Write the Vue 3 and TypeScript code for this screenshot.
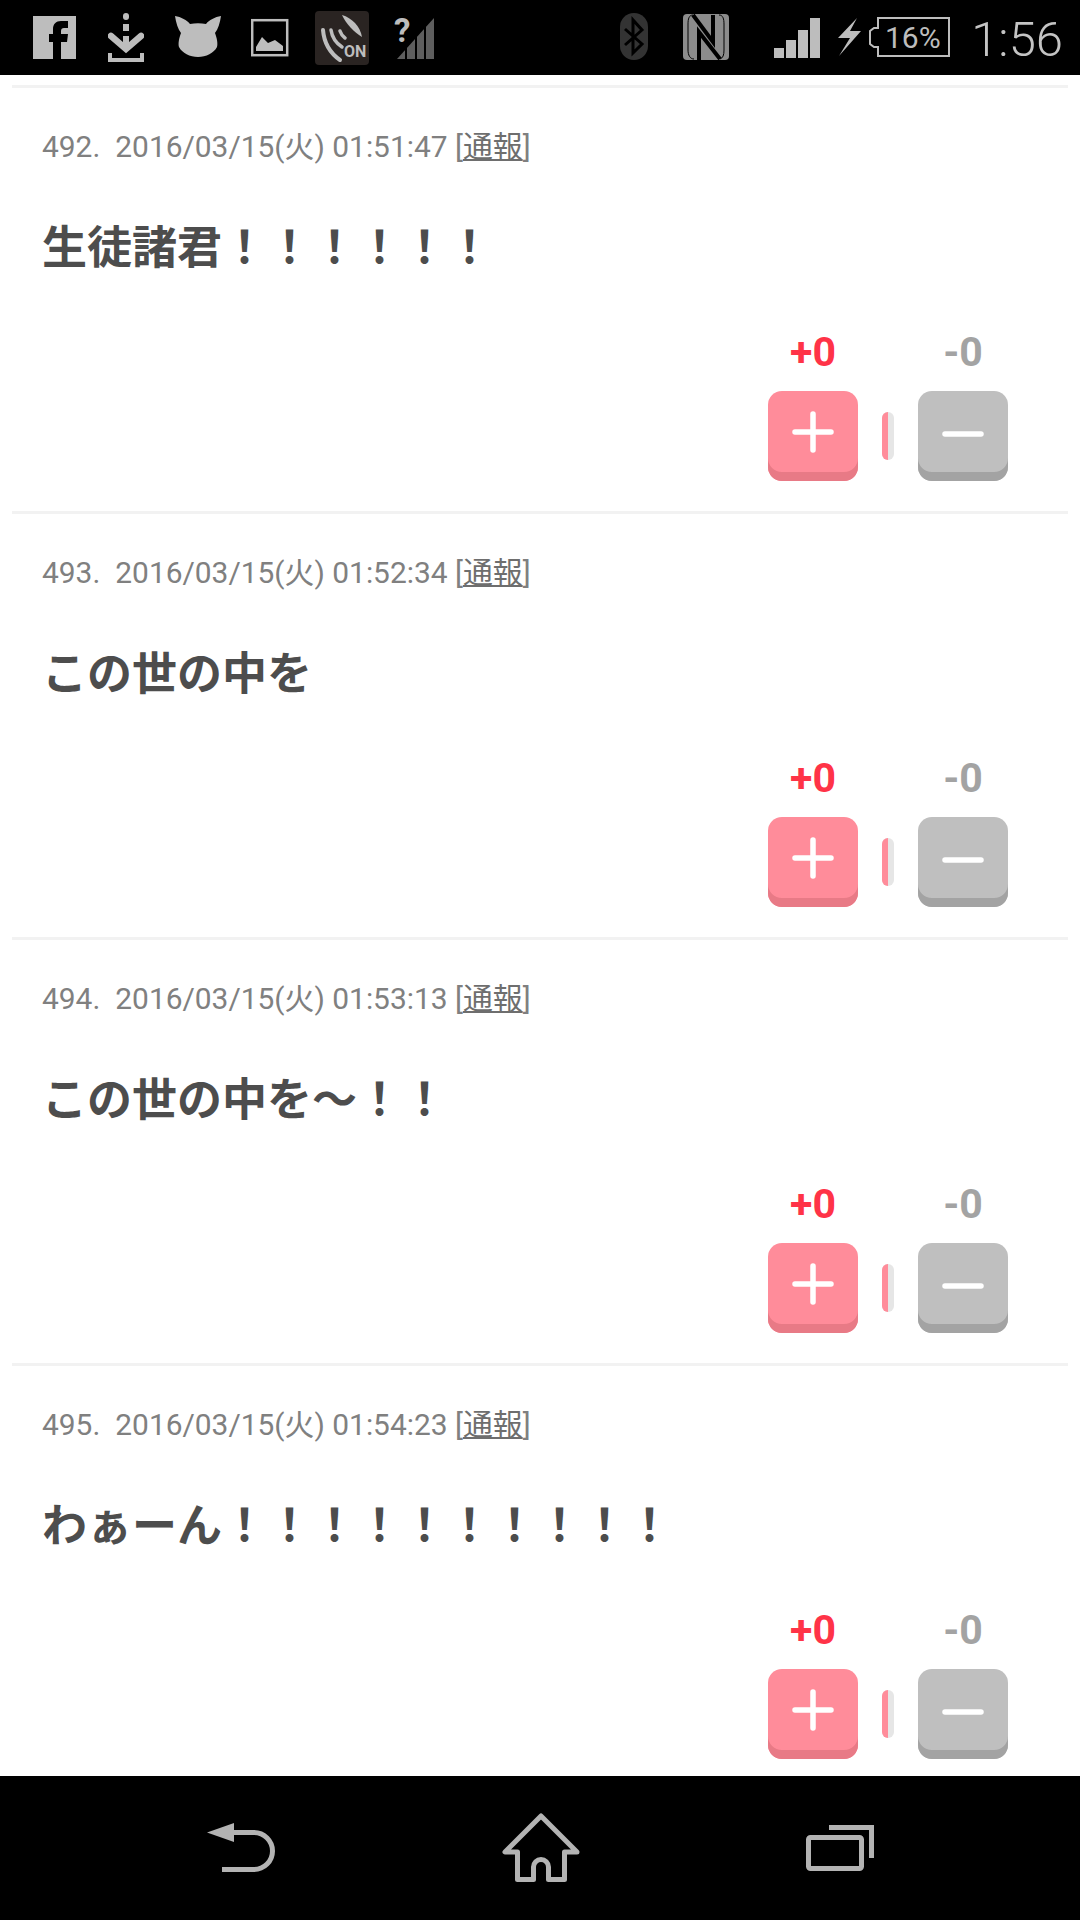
<template>
  <div class="screen">
    <header class="status-bar">
      <svg class="ic" style="width:43px;margin-left:33px" viewBox="33 0 43 75">
        <rect x="33" y="16" width="43" height="43" fill="#bdbdbd" />
        <path d="M53 59V42h-4v-8h4v-5c0-5 3-8 8-8h7v7h-4c-2 0-3 1-3 3v3h7l-1 8h-6v17z" fill="#000" />
      </svg>
      <svg class="ic" style="width:36px;margin-left:32px" viewBox="108 0 36 75" fill="#bdbdbd">
        <rect x="123" y="13" width="6" height="7" rx="3" />
        <rect x="123" y="24" width="6" height="7" />
        <rect x="123" y="36" width="6" height="14" />
        <path d="M111 36l15 13 15-13" fill="none" stroke="#bdbdbd" stroke-width="6.5" stroke-linecap="round" />
        <path d="M108 53h4v5h28v-5h4v9h-36z" />
      </svg>
      <svg class="ic" style="width:46px;margin-left:31px" viewBox="175 0 46 75">
        <path d="M175 16c6 1 12 4 15 8 5-1 11-1 16 0 3-4 9-7 15-8-1 7-3 13-6 17 2 5 3 11 2 14-3 6-11 10-19 10s-16-4-19-10c-1-3 0-9 2-14-3-4-5-10-6-17z" fill="#bdbdbd" />
      </svg>
      <svg class="ic" style="width:38px;margin-left:30px" viewBox="251 0 38 75">
        <rect x="252.2" y="20.2" width="35" height="35" fill="none" stroke="#bdbdbd" stroke-width="2.5" />
        <path d="M256 47l6-10 6 6 7-3 8 6v5h-27z" fill="#bdbdbd" />
      </svg>
      <svg class="ic" style="width:54px;margin-left:26px" viewBox="315 0 54 75">
        <rect x="315" y="11" width="54" height="54" rx="4" fill="#2a2422" />
        <path d="M342 15c10 3 18 11 20 22-8-5-16-13-20-22z" fill="#bdbdbd" />
        <g fill="none" stroke="#bdbdbd" stroke-linecap="round">
          <path d="M340 31c1 3 2 5 5 7" stroke-width="3.5" />
          <path d="M331 30c1 7 5 13 11 17" stroke-width="3.5" />
          <path d="M323 30c1 12 7 23 17 30" stroke-width="4" />
        </g>
        <text class="on-text" x="344" y="57">ON</text>
      </svg>
      <svg class="ic" style="width:41px;margin-left:25px" viewBox="394 0 41 75">
        <path d="M434 18v41h-37z" fill="#5e5e5e" />
        <path d="M406 42v17M416 32v27M425 22v37" stroke="#000" stroke-width="2" />
        <text class="unknown-text" x="394" y="42">?</text>
      </svg>

      <div class="status-right">
        <svg class="ic" style="width:28px" viewBox="619 0 28 75">
          <rect x="619" y="13" width="28" height="47" rx="14" fill="#333" />
          <path d="M624 29l17 15-9 9V20l9 10-17 15" fill="none" stroke="#000" stroke-width="3" />
        </svg>
        <svg class="ic" style="width:46px;margin-left:35px" viewBox="682 0 46 75">
          <rect x="682" y="14" width="46" height="46" rx="4" fill="#8c8c8c" />
          <g fill="none" stroke="#000">
            <path d="M692 15l20 27V15" stroke-width="4" />
            <path d="M698 60V32l21 27" stroke-width="4" />
            <path d="M692 15c-4 0-5 4-5 9v26c0 5 2 9 6 9M718 15c4 0 5 4 5 9v26c0 5-1 8-4 9" stroke-width="1" />
          </g>
        </svg>
        <svg class="ic" style="width:46px;margin-left:45px" viewBox="773 0 46 75" fill="#bdbdbd">
          <rect x="773" y="48" width="10" height="10" />
          <rect x="785" y="40" width="10" height="18" />
          <rect x="797" y="30" width="10" height="28" />
          <rect x="809" y="18" width="10" height="40" />
        </svg>
        <svg class="ic" style="width:23px;margin-left:18px" viewBox="837 0 23 75">
          <path d="M856 18L837 38h12l-11 18 22-25h-11z" fill="#bdbdbd" />
        </svg>
        <svg class="ic" style="width:81px;margin-left:8px" viewBox="868 0 81 75">
          <path d="M877 18h71v38h-71v-9h-4l-4-3V31l4-3h4z" fill="none" stroke="#bdbdbd" stroke-width="2" />
          <text class="batt-text" x="884" y="48">16%</text>
        </svg>
        <span class="clock">1:56</span>
      </div>
    </header>

    <main class="thread">
      <article v-for="post in posts" :key="post.no" class="post">
        <p class="meta">{{ post.no }}.<span class="date">{{ post.date }}</span> [<a class="report">通報</a>]</p>
        <p class="body">{{ post.body }}</p>
        <div class="votes">
          <div class="vote">
            <span class="count plus">+0</span>
            <button class="btn btn-plus">
              <svg width="42" height="42" viewBox="0 0 42 42"><path d="M21 3v36M3 21h36" stroke="#fff" stroke-width="5.5" stroke-linecap="round" /></svg>
            </button>
          </div>
          <div class="ratio"><span class="ratio-fill"></span></div>
          <div class="vote">
            <span class="count minus">-0</span>
            <button class="btn btn-minus">
              <svg width="42" height="42" viewBox="0 0 42 42"><path d="M3 23h36" stroke="#fff" stroke-width="5.5" stroke-linecap="round" /></svg>
            </button>
          </div>
        </div>
      </article>
    </main>

    <footer class="nav-bar">
      <svg width="68" height="50" viewBox="207 1824 68 50">
        <path d="M207 1833.5l27-9.5v19z" fill="#b3b3b3" />
        <path d="M232 1833.5h22a18.5 18.5 0 0 1 0 37h-32" fill="none" stroke="#b3b3b3" stroke-width="5" />
      </svg>
      <svg width="78" height="70" viewBox="501 1814 78 70">
        <path d="M540 1817l-36 36h12.500v27.500h16V1868a7.500 7.500 0 0 1 15 0v12.500h16V1853H576z" fill="none" stroke="#b3b3b3" stroke-width="5" stroke-linejoin="round" />
      </svg>
      <svg width="68" height="46" viewBox="806 1825 68 46">
        <rect x="808.5" y="1837.5" width="53" height="31" rx="2" fill="none" stroke="#b3b3b3" stroke-width="5" />
        <path d="M829 1827.500h42.500V1858" fill="none" stroke="#b3b3b3" stroke-width="5" />
      </svg>
    </footer>
  </div>
</template>

<script setup lang="ts">
interface Post {
  no: number
  date: string
  body: string
}

// full-width exclamation mark
const bang = '\uFF01'

const posts: Post[] = [
  { no: 492, date: '2016/03/15(火) 01:51:47', body: '生徒諸君' + bang.repeat(6) },
  { no: 493, date: '2016/03/15(火) 01:52:34', body: 'この世の中を' },
  { no: 494, date: '2016/03/15(火) 01:53:13', body: 'この世の中を〜' + bang.repeat(2) },
  { no: 495, date: '2016/03/15(火) 01:54:23', body: 'わぁーん' + bang.repeat(10) }
]
</script>

<style>
html,
body {
  margin: 0;
  background: #fff;
}
</style>

<style scoped>
.screen {
  width: 1080px;
  height: 1920px;
  display: flex;
  flex-direction: column;
  overflow: hidden;
  background: #fff;
  font-family: Roboto, "Noto Sans CJK JP", sans-serif;
}

.status-bar {
  flex: none;
  height: 75px;
  display: flex;
  background: #000;
}

.ic {
  flex: none;
  height: 75px;
}

.status-right {
  margin-left: auto;
  display: flex;
}

.on-text {
  font: 700 16px "Roboto", sans-serif;
  fill: #bdbdbd;
}

.unknown-text {
  font: 700 33px "Roboto", sans-serif;
  fill: #bdbdbd;
}

.batt-text {
  font: 400 30px "Roboto", sans-serif;
  fill: #bdbdbd;
}

.clock {
  margin: 0 17px 0 21px;
  font-size: 49px;
  font-weight: 300;
  line-height: 79px;
  color: #c4c4c4;
}

.thread {
  flex: 1;
  min-height: 0;
  overflow: hidden;
  padding-top: 10px;
}

.post {
  margin: 0 12px;
  height: 423px;
  border-top: 3px solid #f2f2f2;
  padding: 0 30px;
  display: flex;
  flex-direction: column;
}

.meta {
  margin: 39px 0 0;
  font-size: 29.9px;
  line-height: 40px;
  color: #808080;
  white-space: pre;
}

.date {
  margin-left: 15px;
}

.report {
  color: #6e6e6e;
  text-decoration: underline;
}

.body {
  margin: 49px 0 0;
  font-size: 45px;
  font-weight: 700;
  line-height: 65px;
  color: #4d4d4d;
  white-space: nowrap;
}

.votes {
  margin-top: 49px;
  padding-right: 30px;
  display: flex;
  justify-content: flex-end;
  align-items: flex-end;
}

.vote {
  display: flex;
  flex-direction: column;
  align-items: center;
  gap: 17px;
}

.count {
  font-size: 41px;
  font-weight: 700;
  line-height: 44px;
}

.plus {
  color: #ff3347;
}

.minus {
  color: #a3a3a3;
}

.btn {
  width: 90px;
  height: 90px;
  padding: 0 0 9px;
  border: 0;
  border-radius: 14px;
  display: flex;
  align-items: center;
  justify-content: center;
}

.btn-plus {
  background: #ff8c9a;
  box-shadow: inset 0 -9px 0 #e87a86;
}

.btn-minus {
  background: #bfbfbf;
  box-shadow: inset 0 -9px 0 #a3a3a3;
}

.ratio {
  width: 12px;
  height: 48px;
  margin: 0 24px 21px;
  border-radius: 6px;
  overflow: hidden;
  background: #e6e6e6;
}

.ratio-fill {
  display: block;
  width: 50%;
  height: 100%;
  background: #ff8c9a;
}

.nav-bar {
  flex: none;
  height: 144px;
  display: flex;
  align-items: center;
  padding: 0 206px 0 207px;
  justify-content: space-between;
  background: #000;
}
</style>
